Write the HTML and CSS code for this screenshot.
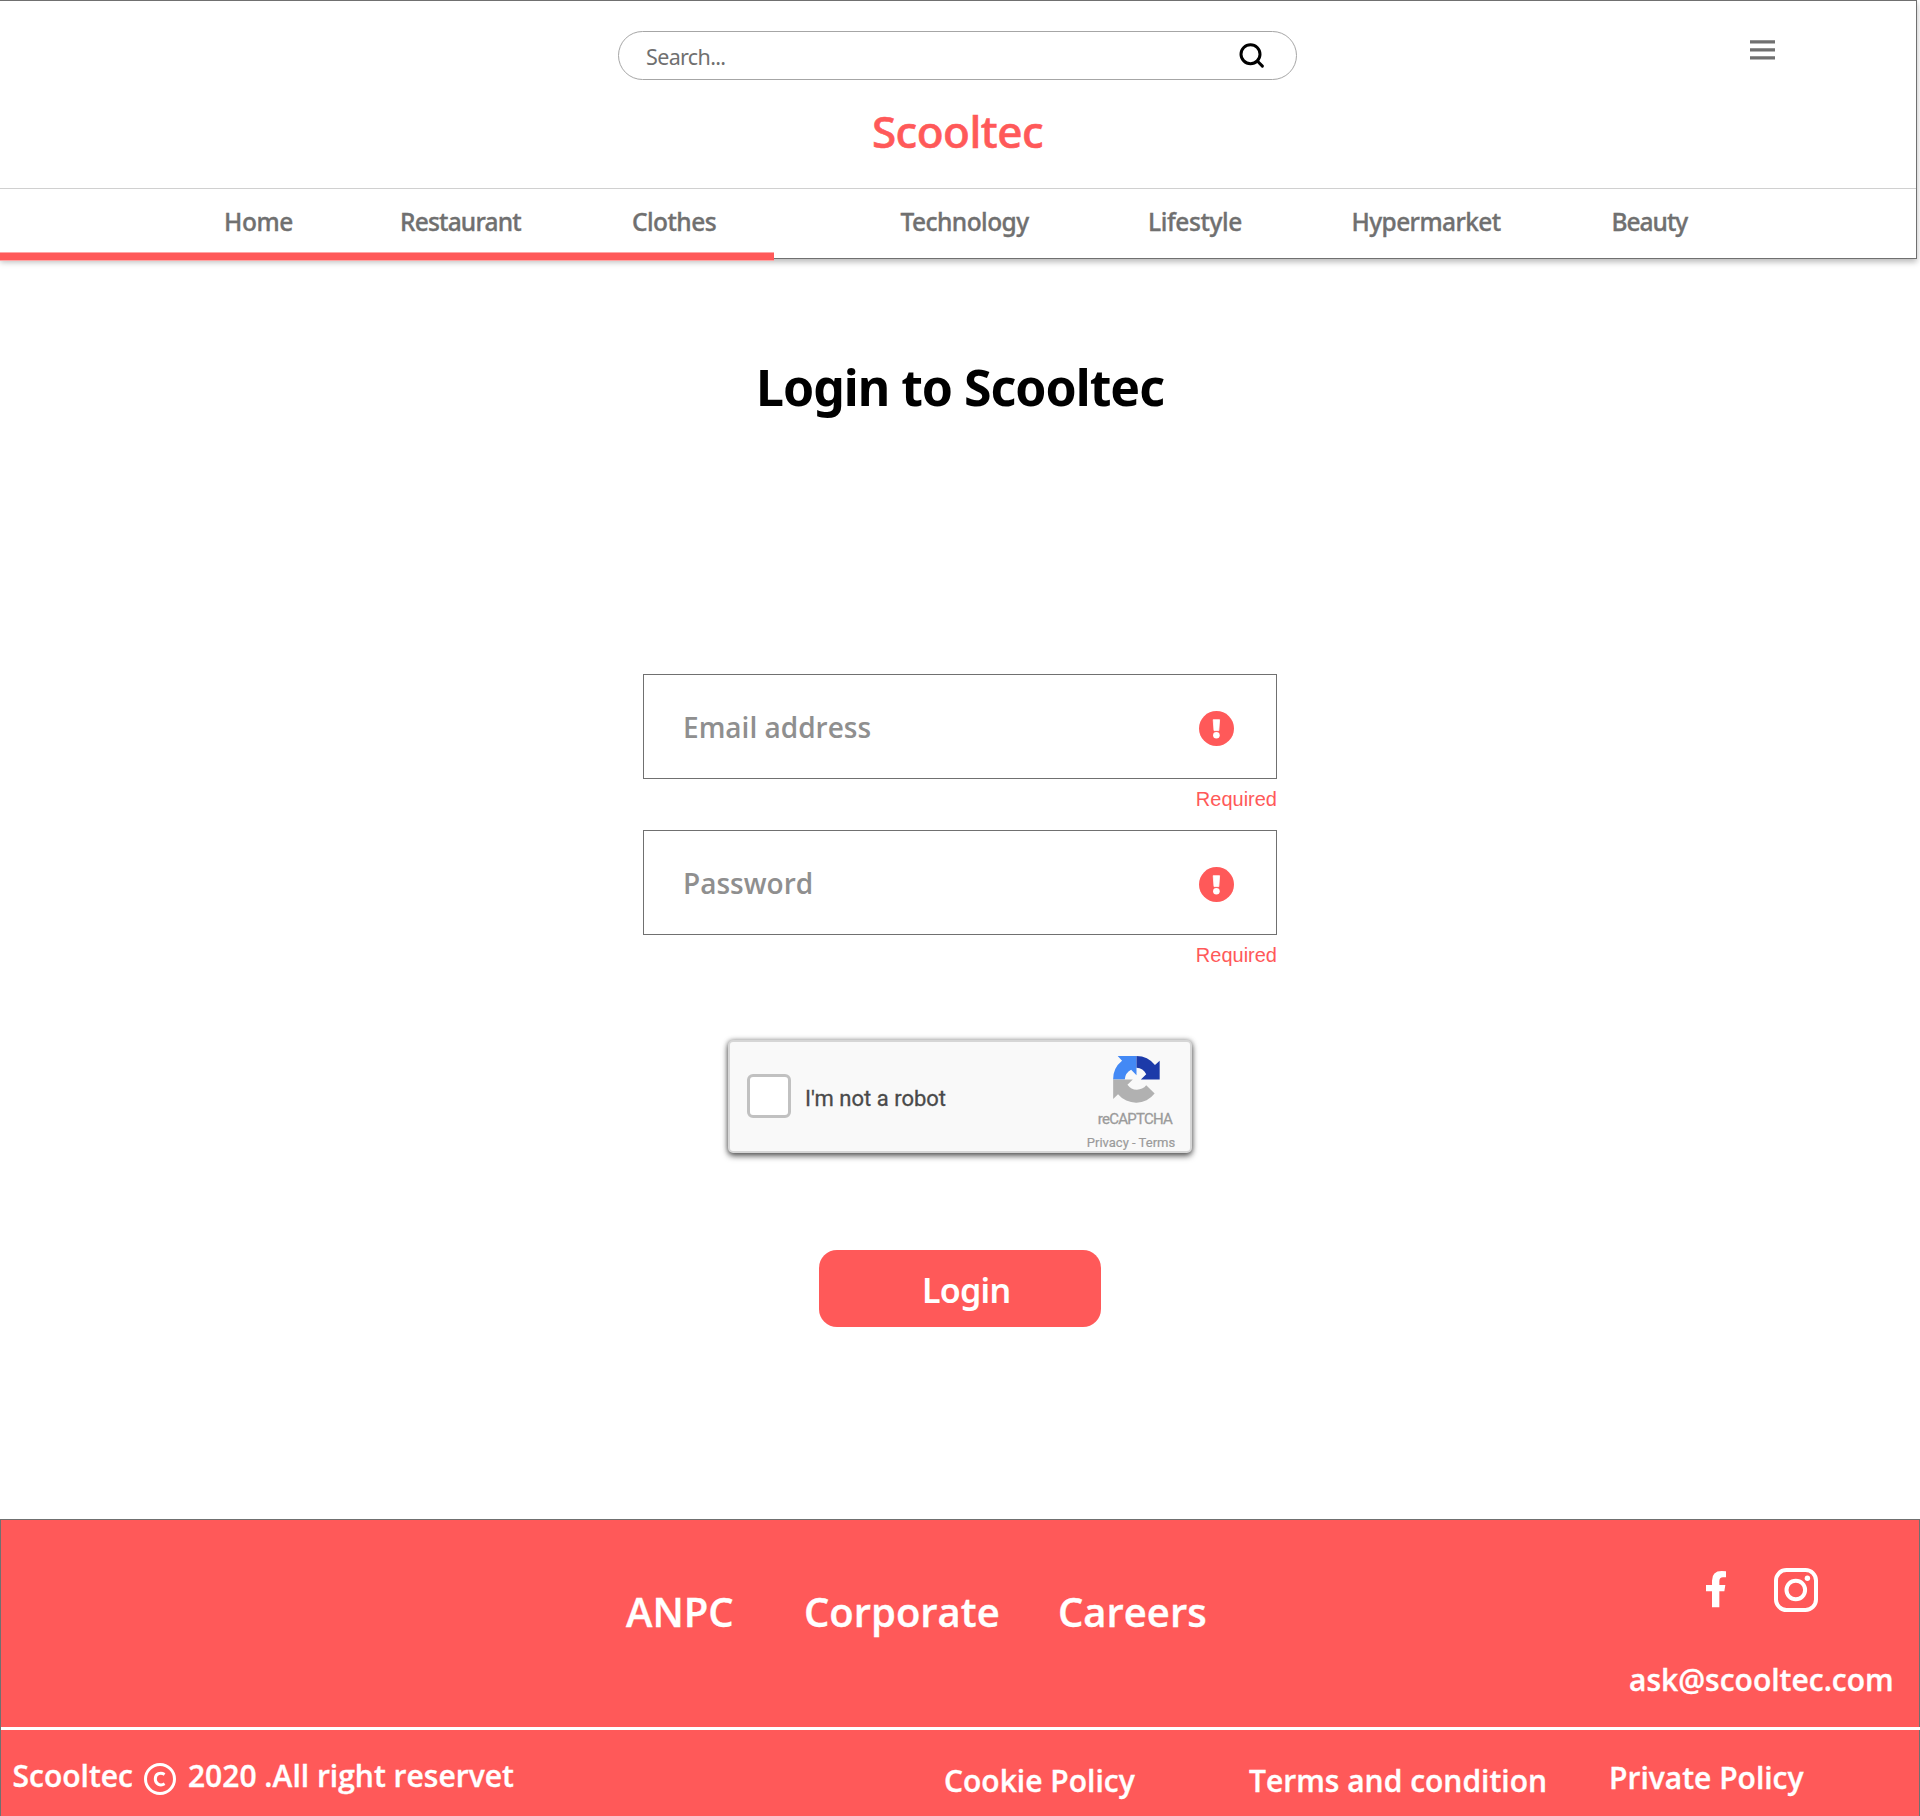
FILE: index.html
```html
<!DOCTYPE html>
<html lang="en">
<head>
<meta charset="utf-8">
<title>Login to Scooltec</title>
<link rel="stylesheet" href="styles.css">
</head>
<body>
<header class="header">
  <div class="header-top">
    <div class="search">
      <span class="search-text">Search...</span>
      <svg class="search-icon" width="26" height="26" viewBox="0 0 26 26" fill="none" stroke="#000" stroke-width="3" stroke-linecap="round"><circle cx="11.5" cy="11.2" r="9.5"/><path d="M18.3 18L23.4 23.1"/></svg>
    </div>
    <svg class="menu" width="25" height="20" viewBox="0 0 25 20" fill="#707070"><path d="M0 .3h25v3.2H0zM0 8.3h25v3.2H0zM0 16.3h25v3.2H0z"/></svg>
    <div class="logo">Scooltec</div>
  </div>
  <nav class="nav">
    <a>Home</a><a>Restaurant</a><a>Clothes</a><a>Technology</a><a>Lifestyle</a><a>Hypermarket</a><a>Beauty</a>
  </nav>
  <div class="progress"></div>
</header>

<main class="main">
  <h1 class="title">Login to Scooltec</h1>
  <form class="form">
    <div class="field">
      <span>Email address</span>
      <svg width="35" height="35" viewBox="0 0 35 35"><circle cx="17.5" cy="17.5" r="17.5" fill="#ff5959"/><path d="M14.200 8.700h6.400l-.8 10.900h-4.800z" fill="#fff" stroke="#fff" stroke-width=".8" stroke-linejoin="round"/><circle cx="17.400" cy="24.300" r="3.300" fill="#fff"/></svg>
    </div>
    <div class="error">Required</div>
    <div class="field">
      <span>Password</span>
      <svg width="35" height="35" viewBox="0 0 35 35"><circle cx="17.5" cy="17.5" r="17.5" fill="#ff5959"/><path d="M14.200 8.700h6.400l-.8 10.900h-4.800z" fill="#fff" stroke="#fff" stroke-width=".8" stroke-linejoin="round"/><circle cx="17.400" cy="24.300" r="3.300" fill="#fff"/></svg>
    </div>
    <div class="error">Required</div>
    <div class="captcha">
      <span class="checkbox"></span>
      <span class="captcha-label">I'm not a robot</span>
      <div class="captcha-brand">
        <svg width="47" height="47" viewBox="103 48 140 140">
          <path fill="#4389f5" d="M117 48H173V105L157 89A35 35 0 0 0 138 118H103.500A70 70 0 0 1 130 62Z"/>
          <path fill="#1c3aa9" d="M173 48A70 70 0 0 1 228 75L242 62V118H186L202 102A35 35 0 0 0 173 83Z"/>
          <path fill="#b1b1b1" d="M103.500 118H162L146 134A35 35 0 0 0 202 135L227 160A70 70 0 0 1 118 162L103.500 176Z"/>
        </svg>
        <div class="captcha-name">reCAPTCHA</div>
        <div class="captcha-links">Privacy - Terms</div>
      </div>
    </div>
    <div class="login">Login</div>
  </form>
</main>

<footer class="footer">
  <div class="footer-top">
    <nav class="footer-nav"><a>ANPC</a><a>Corporate</a><a>Careers</a></nav>
    <div class="contact">
      <div class="social">
        <svg class="facebook" width="20" height="37" viewBox="377 212 60 111" fill="#fff"><path d="M417 321V273H432L435 254H417V243Q417 231 428 231H437V213Q431 212 424 212Q395 212 395 241V254H377V273H395V321Z"/></svg>
        <svg width="44" height="44" viewBox="0 0 44 44" fill="none" stroke="#fff" stroke-width="4"><rect x="2" y="2" width="40" height="40" rx="10.500"/><circle cx="21.800" cy="22" r="9.300"/><circle cx="33.400" cy="10.300" r="2.700" fill="#fff" stroke="none"/></svg>
      </div>
      <div class="email">ask@scooltec.com</div>
    </div>
  </div>
  <div class="footer-bottom">
    <div class="copyright">
      <span>Scooltec</span>
      <svg width="32" height="32" viewBox="0 0 32 32" fill="none" stroke="#fff" stroke-width="3"><circle cx="16" cy="16" r="14.500"/><path d="M20.600 11.400C16.500 8.800 11.300 10.600 11.300 16C11.300 21.400 16.500 23.200 20.600 20.800"/></svg>
      <span>2020 .All right reservet</span>
    </div>
    <a class="cookie">Cookie Policy</a>
    <a class="terms">Terms and condition</a>
    <a class="private">Private Policy</a>
  </div>
</footer>
</body>
</html>
```
FILE: styles.css
```css
* { box-sizing: border-box; }
body { margin: 0; background: #fff; font-family: "Open Sans", sans-serif; font-weight: 600; }
svg { display: block; flex: none; }

.header {
  position: relative; width: 1917px; height: 259px;
  border: 1px solid #707070; border-left: 0;
  box-shadow: 0 3px 6px rgba(0, 0, 0, .28);
  font-family: "Noto Sans", sans-serif; font-weight: 500;
}
.header-top {
  display: grid; grid-template-columns: 618px 679px 1fr; grid-template-rows: 49px 1fr;
  height: 188px; padding-top: 30px; border-bottom: 1px solid #d0d0d0;
}
.search {
  grid-column: 2; display: flex; justify-content: space-between;
  border: 1px solid #a6a6a6; border-radius: 25px; padding: 11px 31px 0 27px;
}
.search-text { font-size: 21.500px; font-weight: 400; line-height: 28px; letter-spacing: -.65px; color: #707070; }
.menu { grid-column: 3; margin: 9px 0 0 453px; }
.logo {
  grid-column: 2; margin-top: 21px; text-align: center; color: #ff5959;
  font-size: 44px; line-height: 60px; letter-spacing: -.5px; -webkit-text-stroke: .6px #ff5959;
}
.nav {
  display: grid; grid-template-columns: 176px 232px 268.500px 247.500px 203.500px 260px auto;
  padding: 17px 0 0 224px; font-size: 24.500px; line-height: 32px; color: #707070;
  -webkit-text-stroke: .35px #707070;
}
.nav a:nth-child(1) { letter-spacing: -.4px; }
.nav a:nth-child(2) { letter-spacing: -.8px; }
.nav a:nth-child(3), .nav a:nth-child(4) { letter-spacing: -.54px; }
.nav a:nth-child(5) { letter-spacing: -.4px; }
.nav a:nth-child(6) { letter-spacing: -.6px; }
.nav a:nth-child(7) { letter-spacing: -1px; }
.progress {
  position: absolute; left: 0; top: 251px; width: 773.500px; height: 9px;
  background: #ff5959; border: solid #ffa5a5; border-width: 1px 0;
}

.main { height: 1260px; padding-top: 94px; }
.title { margin: 0; text-align: center; font: 700 50px/68px "Noto Sans", sans-serif; letter-spacing: -1.020px; color: #000; }
.form { width: 634px; margin: 253px auto 0; }
.field {
  display: flex; align-items: center; justify-content: space-between;
  height: 105px; padding: 0 42px 0 39px; border: 1px solid #707070;
  font-size: 28px; line-height: 38px; color: #8f8f8f;
}
.field svg { margin-top: 3px; }
.error { height: 51px; padding-top: 8px; text-align: right; font: 400 20px/24px "Liberation Sans", sans-serif; color: #ff5959; }
.captcha {
  display: flex; width: 464px; height: 113px; margin: 54px auto 0; padding: 0 0 0 17px;
  border: 2px solid #d6d6d6; border-radius: 5px; background: #f9f9f9;
  box-shadow: 0 3px 6px rgba(0, 0, 0, .6), 0 0 5px rgba(0, 0, 0, .35);
  font-family: Roboto, sans-serif; font-weight: 400;
}
.checkbox { width: 44px; height: 44px; margin-top: 32px; border: 3px solid #c1c1c1; border-radius: 6px; background: #fff; }
.captcha-label { margin: 43px 0 0 14px; font-size: 22px; line-height: 28px; color: #4a4a4a; -webkit-text-stroke: .3px #4a4a4a; }
.captcha-brand { display: flex; flex-direction: column; align-items: center; width: 94px; margin: 14px 12px 0 auto; color: #9b9b9b; }
.captcha-brand svg { margin-left: 11px; }
.captcha-name { margin: 6px 0 0 8px; font-size: 15px; line-height: 20px; letter-spacing: -.75px; -webkit-text-stroke: .3px #9b9b9b; }
.captcha-links { margin-top: 5px; font-size: 13px; line-height: 18px; white-space: nowrap; -webkit-text-stroke: .2px #9b9b9b; }
.login {
  width: 282px; height: 77px; margin: 97px auto 0; padding: 17px 0 0 103px;
  border-radius: 18px; background: #ff5959; color: #fff;
  font: 600 34px/46px "Noto Sans", sans-serif; letter-spacing: -.75px;
}

.footer {
  height: 297px; border: 1px solid #707070; border-bottom: 0;
  background: #ff5959; color: #fff; -webkit-text-stroke: .35px #fff;
}
.footer-top { display: flex; height: 210px; margin-right: -1px; border-bottom: 3px solid #fff; }
.footer-nav { display: grid; grid-template-columns: 178px 254px auto; width: 1628px; padding: 65px 0 0 625px; font-size: 40px; line-height: 54px; }
.social { display: flex; gap: 48px; align-items: center; height: 44px; margin: 48px 0 0 77px; }
.facebook { margin-top: -1px; }
.email { margin-top: 48px; font-size: 30px; line-height: 40px; }
.footer-bottom { display: grid; grid-template-columns: 931.500px 305px 360px auto; padding: 26px 0 0 11.500px; font-size: 30px; line-height: 40px; }
.copyright { display: flex; gap: 11.500px; }
.copyright svg { margin-top: 7px; }
.cookie, .terms { padding-top: 5px; }
.private { padding-top: 2px; }
```
